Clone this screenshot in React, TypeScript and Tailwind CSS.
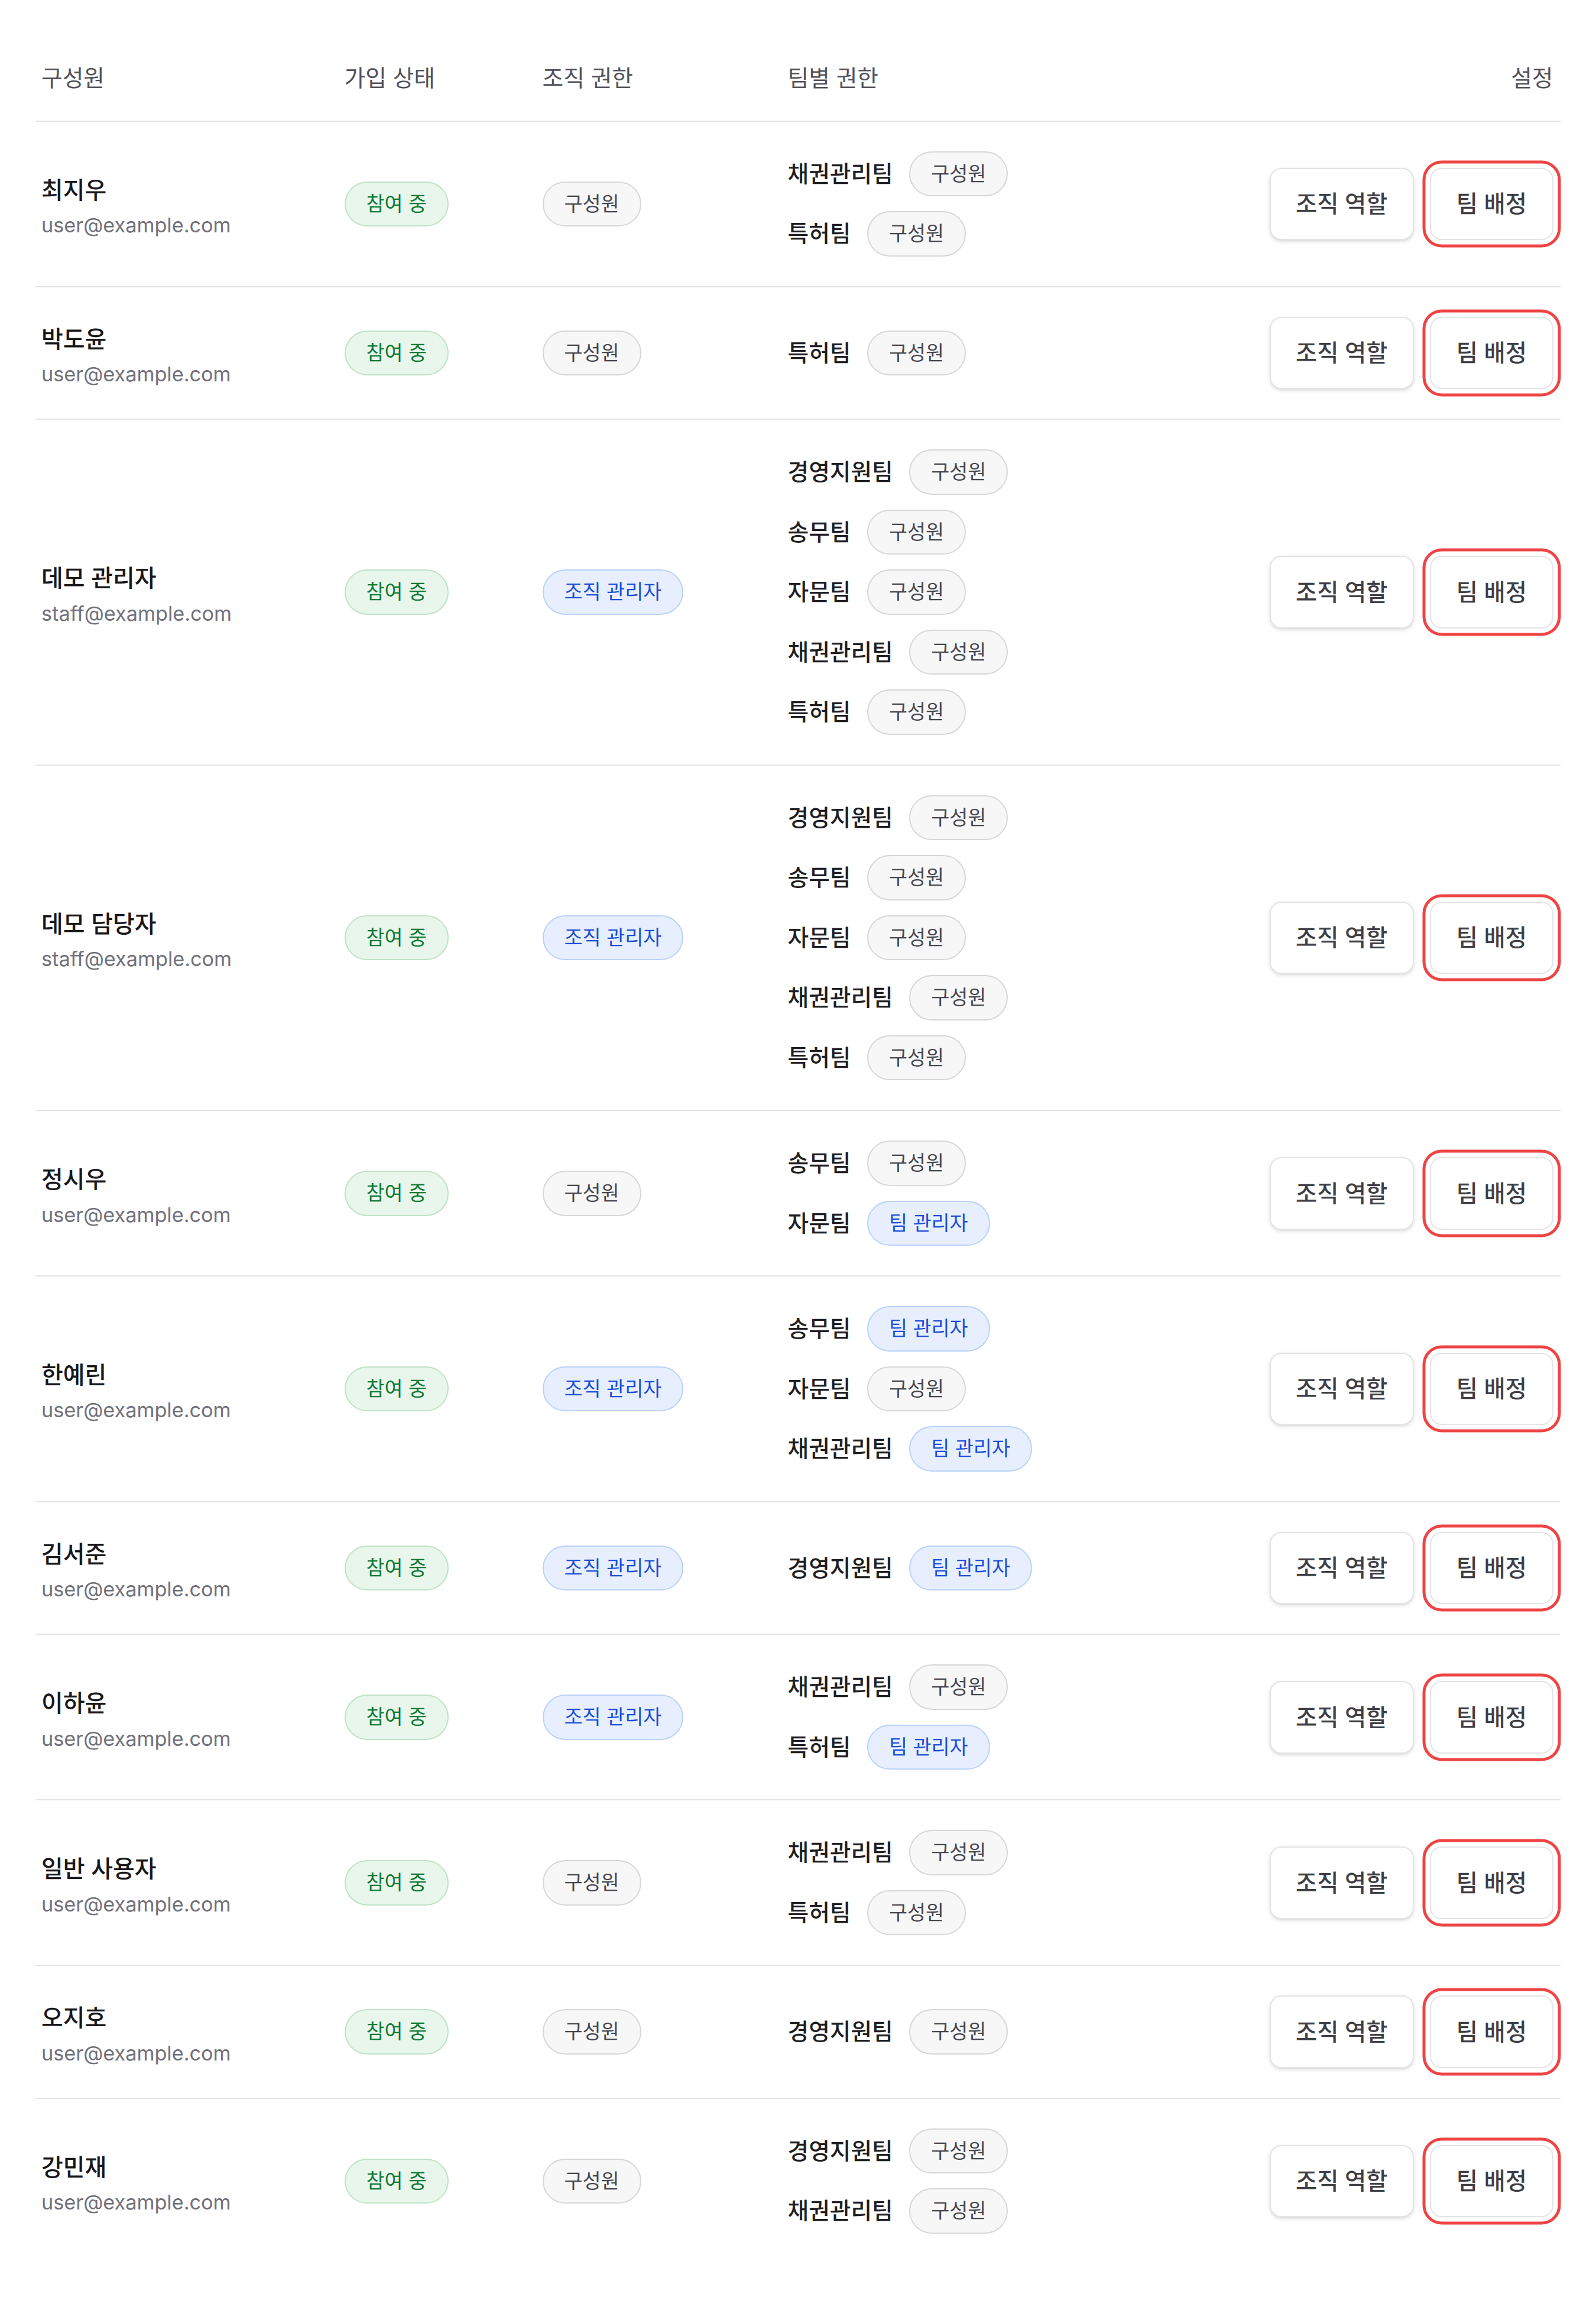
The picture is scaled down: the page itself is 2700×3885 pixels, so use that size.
import React from 'react';

type Tone = 'green' | 'blue' | 'gray';
type Team = { name: string; admin?: boolean };
type Member = { name: string; email: string; orgAdmin?: boolean; teams: Team[] };

const allTeams: Team[] = [
  { name: '경영지원팀' },
  { name: '송무팀' },
  { name: '자문팀' },
  { name: '채권관리팀' },
  { name: '특허팀' },
];

const members: Member[] = [
  { name: '최지우', email: 'user@example.com', teams: [{ name: '채권관리팀' }, { name: '특허팀' }] },
  { name: '박도윤', email: 'user@example.com', teams: [{ name: '특허팀' }] },
  { name: '데모 관리자', email: 'staff@example.com', orgAdmin: true, teams: allTeams },
  { name: '데모 담당자', email: 'staff@example.com', orgAdmin: true, teams: allTeams },
  { name: '정시우', email: 'user@example.com', teams: [{ name: '송무팀' }, { name: '자문팀', admin: true }] },
  {
    name: '한예린',
    email: 'user@example.com',
    orgAdmin: true,
    teams: [{ name: '송무팀', admin: true }, { name: '자문팀' }, { name: '채권관리팀', admin: true }],
  },
  { name: '김서준', email: 'user@example.com', orgAdmin: true, teams: [{ name: '경영지원팀', admin: true }] },
  { name: '이하윤', email: 'user@example.com', orgAdmin: true, teams: [{ name: '채권관리팀' }, { name: '특허팀', admin: true }] },
  { name: '일반 사용자', email: 'user@example.com', teams: [{ name: '채권관리팀' }, { name: '특허팀' }] },
  { name: '오지호', email: 'user@example.com', teams: [{ name: '경영지원팀' }] },
  { name: '강민재', email: 'user@example.com', teams: [{ name: '경영지원팀' }, { name: '채권관리팀' }] },
];

const toneClass: Record<Tone, string> = {
  green: 'bg-[#e9f6ec] border-[#bfe3c6] text-[#0f7a35]',
  blue: 'bg-[#e7effe] border-[#bad2fb] text-[#1d4ed8]',
  gray: 'bg-[#f7f7f7] border-[#d7d7d9] text-[#46464f]',
};

const Pill: React.FC<{ tone: Tone; children: React.ReactNode }> = ({ tone, children }) => (
  <span
    className={`inline-flex items-center rounded-full border px-3.5 py-1 text-[13.5px] leading-[21px] whitespace-nowrap ${toneClass[tone]}`}
  >
    {children}
  </span>
);

const ActionButton: React.FC<{ highlight?: boolean; children: React.ReactNode }> = ({ highlight, children }) => (
  <button
    className={`h-[49px] rounded-lg border border-[#e4e4e7] bg-white px-[17px] text-[15.75px] font-medium text-[#3f3f46] shadow-sm whitespace-nowrap ${
      highlight ? 'ring-2 ring-[#ef4444] ring-offset-[3px] ring-offset-white' : ''
    }`}
  >
    {children}
  </button>
);

const cols = 'grid grid-cols-[205px_134px_166px_1fr_auto]';

const App: React.FC = () => {
  return (
    <div className="[zoom:2.5] bg-white font-[Inter,'Noto_Sans_CJK_KR',sans-serif]">
      <div className="w-[1080px] p-6">
        {/* header */}
        <div className={`${cols} border-b border-[#e4e4e7] text-[15.5px] leading-[22px] text-[#52525b]`}>
          <div className="px-1 pt-[17.5px] pb-[18px]">구성원</div>
          <div className="px-1 pt-[17.5px] pb-[18px]">가입 상태</div>
          <div className="px-1 pt-[17.5px] pb-[18px]">조직 권한</div>
          <div className="px-1 pt-[17.5px] pb-[18px]">팀별 권한</div>
          <div className="pl-1 pr-[5px] pt-[17.5px] pb-[18px] text-right">설정</div>
        </div>

        {members.map((mem, i) => (
          <div key={i} className={`${cols} items-center border-b border-[#e4e4e7] last:border-b-0`}>
            <div className="px-1 py-5">
              <div className="text-base leading-[26px] font-medium text-[#18181b]">{mem.name}</div>
              <div className="mt-[3px] text-[13.7px] leading-4 text-[#71717a]">{mem.email}</div>
            </div>
            <div className="px-1 py-5">
              <Pill tone="green">참여 중</Pill>
            </div>
            <div className="px-1 py-5">
              {mem.orgAdmin ? <Pill tone="blue">조직 관리자</Pill> : <Pill tone="gray">구성원</Pill>}
            </div>
            <div className="flex flex-col items-start gap-[10px] px-1 py-5">
              {mem.teams.map((t) => (
                <div key={t.name} className="flex items-center gap-[11px]">
                  <span className="text-[15.5px] font-medium text-[#1f1f23]">{t.name}</span>
                  {t.admin ? <Pill tone="blue">팀 관리자</Pill> : <Pill tone="gray">구성원</Pill>}
                </div>
              ))}
            </div>
            <div className="flex items-center justify-end gap-[11px] pl-1 pr-[5px] py-5">
              <ActionButton>조직 역할</ActionButton>
              <ActionButton highlight>팀 배정</ActionButton>
            </div>
          </div>
        ))}
      </div>
    </div>
  );
};

export default App;
